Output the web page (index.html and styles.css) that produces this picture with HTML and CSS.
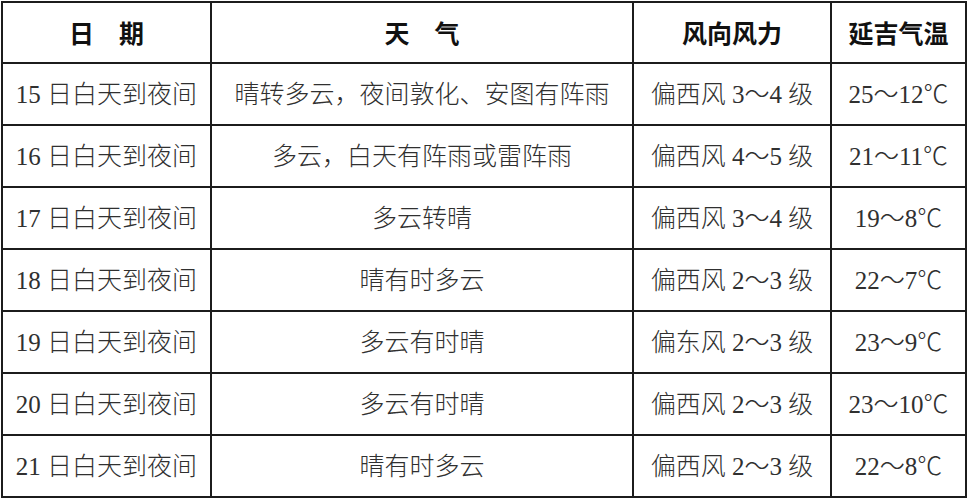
FILE: index.html
```html
<!DOCTYPE html>
<html lang="zh-CN">
<head>
<meta charset="utf-8">
<title>延吉天气预报</title>
<link rel="stylesheet" href="styles.css">
</head>
<body>
<div class="table">
  <div class="cell head">日　期</div>
  <div class="cell head">天　气</div>
  <div class="cell head">风向风力</div>
  <div class="cell head">延吉气温</div>

  <div class="cell">15 日白天到夜间</div>
  <div class="cell">晴转多云，夜间敦化、安图有阵雨</div>
  <div class="cell">偏西风 3～4 级</div>
  <div class="cell">25～12℃</div>

  <div class="cell">16 日白天到夜间</div>
  <div class="cell">多云，白天有阵雨或雷阵雨</div>
  <div class="cell">偏西风 4～5 级</div>
  <div class="cell">21～11℃</div>

  <div class="cell">17 日白天到夜间</div>
  <div class="cell">多云转晴</div>
  <div class="cell">偏西风 3～4 级</div>
  <div class="cell">19～8℃</div>

  <div class="cell">18 日白天到夜间</div>
  <div class="cell">晴有时多云</div>
  <div class="cell">偏西风 2～3 级</div>
  <div class="cell">22～7℃</div>

  <div class="cell">19 日白天到夜间</div>
  <div class="cell">多云有时晴</div>
  <div class="cell">偏东风 2～3 级</div>
  <div class="cell">23～9℃</div>

  <div class="cell">20 日白天到夜间</div>
  <div class="cell">多云有时晴</div>
  <div class="cell">偏西风 2～3 级</div>
  <div class="cell">23～10℃</div>

  <div class="cell">21 日白天到夜间</div>
  <div class="cell">晴有时多云</div>
  <div class="cell">偏西风 2～3 级</div>
  <div class="cell">22～8℃</div>
</div>
</body>
</html>
```
FILE: styles.css
```css
html, body {
  margin: 0;
  padding: 0;
  background: #ffffff;
}

.table {
  margin: 1px 0 0 1px;
  width: 966px;
  box-sizing: border-box;
  display: grid;
  grid-template-columns: 209px 422px 198px 135px;
  grid-template-rows: 61px repeat(7, 62px);
  border-left: 2px solid #1c1c1c;
  border-top: 2px solid #1c1c1c;
  font-family: "Liberation Serif", "Noto Sans CJK SC", serif;
  font-size: 25px;
  font-weight: 300;
  color: #303030;
}

.cell {
  box-sizing: border-box;
  border-right: 2px solid #1c1c1c;
  border-bottom: 2px solid #1c1c1c;
  display: flex;
  align-items: center;
  justify-content: center;
  padding-top: 1px;
  white-space: nowrap;
  line-height: 1;
}

.head {
  font-family: "Noto Sans CJK SC", sans-serif;
  font-weight: 700;
  color: #111111;
  padding-top: 0;
}
```
